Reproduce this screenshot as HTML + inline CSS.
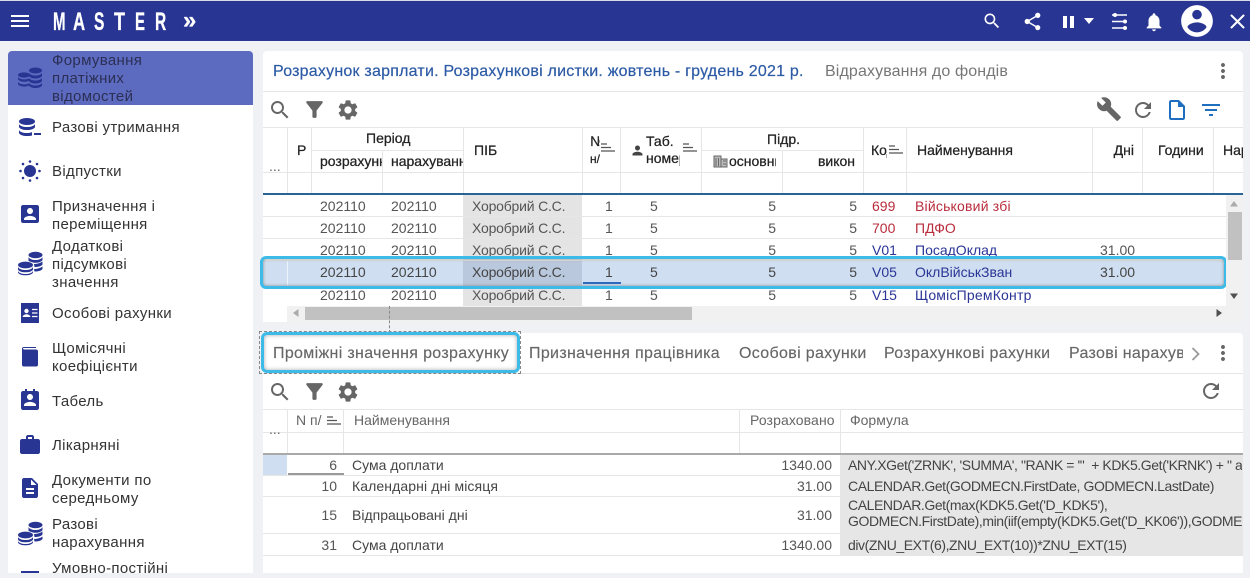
<!DOCTYPE html>
<html lang="uk"><head><meta charset="utf-8"><title>Master</title>
<style>
html,body{margin:0;padding:0;width:1250px;height:573px;overflow:hidden;background:#eff1f5;font-family:"Liberation Sans",sans-serif;font-size:14px;color:#444}
.a,.t,svg,.l{position:absolute}
.t{white-space:nowrap;line-height:18px}
.s{color:#333;font-size:15px;letter-spacing:.33px;left:52px;margin-top:1px}
.h{color:#222;-webkit-text-stroke:.25px #222;font-size:14px}
.d{color:#555}
.r{text-align:right}
.rd{color:#b92c3c}.bl{color:#2a3596}
.g{color:#666}
.hg{color:#666;font-size:14px}
.tab{color:#666;font-size:16px;letter-spacing:.33px;-webkit-text-stroke:.15px #666;margin-top:1px}
.l{background:#e6e6e6}
.c{overflow:hidden}
.f{letter-spacing:-.42px}
.p{letter-spacing:-.2px}
svg.n{fill:#283593}
svg.gy{fill:#666}
svg.w{fill:#fff}
</style></head><body>

<!-- header -->
<div class="a" style="left:0;top:1px;width:1250px;height:40px;background:#283593"></div>
<div class="a" style="left:0;top:0;width:1250px;height:1px;background:#d8dbe8"></div>
<svg class="w" style="left:8px;top:9px" width="24" height="24" viewBox="0 0 24 24"><path d="M3 18h18v-2H3v2zm0-5h18v-2H3v2zm0-7v2h18V6H3z"/></svg>
<div style="position:absolute;left:0;top:0;color:#fff;font-weight:bold;font-size:25px;line-height:26px;-webkit-text-stroke:.3px #fff">
<span class="a" style="left:53px;top:9px;transform:scaleX(.6);transform-origin:left">M</span>
<span class="a" style="left:73px;top:9px;transform:scaleX(.67);transform-origin:left">A</span>
<span class="a" style="left:94px;top:9px;transform:scaleX(.62);transform-origin:left">S</span>
<span class="a" style="left:114px;top:9px;transform:scaleX(.72);transform-origin:left">T</span>
<span class="a" style="left:135px;top:9px;transform:scaleX(.6);transform-origin:left">E</span>
<span class="a" style="left:155px;top:9px;transform:scaleX(.62);transform-origin:left">R</span>
<span class="a" style="left:183px;top:8px;font-size:24px">»</span>
</div>
<svg class="w" style="left:982px;top:11px" width="20" height="20" viewBox="0 0 24 24"><path d="M15.5 14h-.79l-.28-.27C15.41 12.59 16 11.11 16 9.5 16 5.91 13.09 3 9.5 3S3 5.91 3 9.5 5.91 16 9.5 16c1.61 0 3.09-.59 4.23-1.57l.27.28v.79l5 4.99L20.49 19l-4.99-5zm-6 0C7.01 14 5 11.99 5 9.5S7.01 5 9.5 5 14 7.01 14 9.5 11.99 14 9.5 14z"/></svg>
<svg class="w" style="left:1022px;top:11px" width="21" height="21" viewBox="0 0 24 24"><path d="M18 16.08c-.76 0-1.44.3-1.96.77L8.91 12.7c.05-.23.09-.46.09-.7s-.04-.47-.09-.7l7.05-4.11c.54.5 1.25.81 2.04.81 1.66 0 3-1.34 3-3s-1.34-3-3-3-3 1.34-3 3c0 .24.04.47.09.7L8.04 9.81C7.5 9.31 6.79 9 6 9c-1.66 0-3 1.34-3 3s1.34 3 3 3c.79 0 1.5-.31 2.04-.81l7.12 4.16c-.05.21-.08.43-.08.65 0 1.61 1.31 2.92 2.92 2.92 1.61 0 2.92-1.31 2.92-2.92s-1.31-2.92-2.92-2.92z"/></svg>
<div class="a" style="left:1063px;top:16px;width:4px;height:12px;background:#fff"></div>
<div class="a" style="left:1070px;top:16px;width:4px;height:12px;background:#fff"></div>
<svg class="w" style="left:1083px;top:18px" width="12" height="7" viewBox="0 0 12 7"><path d="M1 0h10L6 6z"/></svg>
<svg style="left:1110px;top:12px" width="20" height="20" viewBox="0 0 20 20"><g stroke="#fff" stroke-width="1.5" fill="#fff"><path d="M2 3h15M2 9.500h15M2 16h15" fill="none"/><circle cx="5" cy="3" r="2" stroke="none"/><circle cx="15" cy="9.500" r="2" stroke="none"/><circle cx="15" cy="16" r="2" stroke="none"/></g></svg>
<svg class="w" style="left:1143px;top:11px" width="22" height="22" viewBox="0 0 24 24"><path d="M12 22c1.1 0 2-.9 2-2h-4c0 1.1.89 2 2 2zm6-6v-5c0-3.07-1.64-5.64-4.5-6.32V4c0-.83-.67-1.5-1.5-1.5s-1.5.67-1.5 1.5v.68C7.63 5.36 6 7.92 6 11v5l-2 2v1h16v-1l-2-2z"/></svg>
<svg class="w" style="left:1178px;top:2px" width="38" height="38" viewBox="0 0 24 24"><path d="M12 2C6.48 2 2 6.48 2 12s4.48 10 10 10 10-4.48 10-10S17.52 2 12 2zm0 3c1.66 0 3 1.34 3 3s-1.34 3-3 3-3-1.34-3-3 1.34-3 3-3zm0 14.2c-2.5 0-4.71-1.28-6-3.22.03-1.99 4-3.08 6-3.08 1.99 0 5.97 1.09 6 3.08-1.29 1.94-3.5 3.22-6 3.22z"/></svg>
<svg class="w" style="left:1225px;top:9px" width="25" height="25" viewBox="0 0 24 24"><path d="M19 6.41L17.59 5 12 10.59 6.41 5 5 6.41 10.59 12 5 17.59 6.41 19 12 13.41 17.59 19 19 17.59 13.41 12z"/></svg>

<!-- sidebar -->
<div class="a" style="left:8px;top:51px;width:245px;height:522px;background:#fff;border-radius:4px 4px 0 0"></div>
<div class="a" style="left:8px;top:51px;width:245px;height:54px;background:#5c6bc0;border-radius:4px 4px 0 0"></div>
<div class="t s" style="top:51px;color:#2b2f55">Формування</div>
<div class="t s" style="top:69px;color:#2b2f55">платіжних</div>
<div class="t s" style="top:87px;color:#2b2f55">відомостей</div>
<div class="t s" style="top:118px">Разові утримання</div>
<div class="t s" style="top:162px">Відпустки</div>
<div class="t s" style="top:197px">Призначення і</div>
<div class="t s" style="top:215px">переміщення</div>
<div class="t s" style="top:237px">Додаткові</div>
<div class="t s" style="top:255px">підсумкові</div>
<div class="t s" style="top:273px">значення</div>
<div class="t s" style="top:304px">Особові рахунки</div>
<div class="t s" style="top:339px">Щомісячні</div>
<div class="t s" style="top:357px">коефіцієнти</div>
<div class="t s" style="top:392px">Табель</div>
<div class="t s" style="top:436px">Лікарняні</div>
<div class="t s" style="top:471px">Документи по</div>
<div class="t s" style="top:489px">середньому</div>
<div class="t s" style="top:515px">Разові</div>
<div class="t s" style="top:533px">нарахування</div>
<div class="t s" style="top:559px">Умовно-постійні</div>

<!-- sidebar icons -->
<svg class="n" style="left:18px;top:67px" width="25" height="22" viewBox="0 0 25 22"><g><ellipse cx="6" cy="8" rx="6" ry="2.6"/><path d="M0 10c1 1.6 3.5 2.4 6 2.4s4-.5 5-1.2v2.4c-1 .7-2.700 1.200-5 1.200S1 13.900 0 12.300zM0 15c1 1.600 3.500 2.400 6 2.400s4-.5 5-1.200v2c-1 .9-2.700 1.400-5 1.400S1 18.800 0 17.300z"/><ellipse cx="17.500" cy="3.500" rx="6.500" ry="3"/><path d="M11 6c1.200 1.700 3.700 2.500 6.500 2.500S22.800 7.700 24 6v3c-1 1.600-3.500 2.500-6.500 2.500S12 10.600 11 9zM11 11c1.200 1.700 3.700 2.500 6.500 2.500s5.300-.8 6.500-2.500v3c-1 1.600-3.500 2.500-6.500 2.500S12 15.600 11 14zM11 16c1.200 1.700 3.700 2.500 6.500 2.500s5.300-.8 6.500-2.500v2.500c-1 1.700-3.500 2.500-6.500 2.500S12 20.200 11 18.500z"/></g></svg>
<svg class="n" style="left:19px;top:118px" width="23" height="18" viewBox="0 0 23 18"><ellipse cx="8" cy="3.500" rx="8" ry="3.500"/><path d="M0 6c1 2 4 3 8 3s7-1 8-3v3c-1 2-4 3-8 3s-7-1-8-3zM0 12c1 2 4 3 8 3 2 0 4-.3 5-1v3.500c-1 .4-3 .5-5 .5-4 0-7-1-8-3z"/><rect x="15" y="15" width="7" height="2"/></svg>
<svg class="n" style="left:18px;top:159px" width="24" height="24" viewBox="0 0 24 24"><circle cx="12" cy="12" r="6"/><circle cx="12" cy="2.500" r="1.300"/><circle cx="12" cy="21.500" r="1.300"/><circle cx="2.500" cy="12" r="1.300"/><circle cx="21.500" cy="12" r="1.300"/><circle cx="5" cy="5" r="1.300"/><circle cx="19" cy="5" r="1.300"/><circle cx="5" cy="19" r="1.300"/><circle cx="19" cy="19" r="1.300"/></svg>
<svg class="n" style="left:18px;top:202px" width="24" height="24" viewBox="0 0 24 24"><path d="M3 5v14c0 1.100.89 2 2 2h14c1.100 0 2-.9 2-2V5c0-1.100-.9-2-2-2H5c-1.110 0-2 .9-2 2zm12 4c0 1.660-1.340 3-3 3s-3-1.340-3-3 1.340-3 3-3 3 1.340 3 3zm-9 8c0-2 4-3.100 6-3.100s6 1.100 6 3.100v1H6v-1z"/></svg>
<svg class="n" style="left:18px;top:251px" width="25" height="25" viewBox="0 0 25 25"><g><ellipse cx="17.500" cy="4" rx="7" ry="3.200"/><path d="M10.500 6c1 2 4 3 7 3s6-1 7-3v3c-1 1.800-4 2.800-7 2.800-1 0-2-.1-3-.4-1-.5-3-.8-4-1.400zM16 13c3 0 6-.8 8.500-2.500v3c-1 1.500-4 2.500-8 2.500zM16 18c3 0 6-.8 8.500-2.500v2.500c-1 1.500-4 2.500-8 2.500z"/><ellipse cx="7.500" cy="14" rx="7.500" ry="3.400"/><path d="M0 16c1 2 4 3 7.500 3s6.500-1 7.500-3v2.500c-1 2-4 2.800-7.500 2.800S1 20.500 0 18.500zM0 20c1 2 4 3 7.500 3s6.500-1 7.500-3v1.500c-1 2-4 2.800-7.500 2.800S1 23.500 0 21.500z"/></g></svg>
<svg style="left:21px;top:303px" width="18" height="20" viewBox="0 0 18 20"><path fill="#283593" d="M0 0h18v20H0z"/><circle cx="5.500" cy="8" r="2.200" fill="#fff"/><path d="M1.500 14c.5-2 2.500-2.800 4-2.800s3.500.8 4 2.800z" fill="#fff"/><path d="M11 6.500h5.500M11 10h5.500M11 13.500h5.500" stroke="#fff" stroke-width="1.200"/></svg>
<svg class="n" style="left:18px;top:344px" width="24" height="24" viewBox="0 0 24 24"><path d="M6 5.500h12c1.100 0 2 .5 2 2V21c0 1-.9 1.500-2 1.500H6c-1.100 0-2-.5-2-1.500V4.500C4 3.500 5 3 6 3h12v1H6c-.6 0-1 .2-1 .5s.4 1 1 1z"/></svg>
<svg class="n" style="left:18px;top:388px" width="24" height="24" viewBox="0 0 24 24"><path d="M5 3h2V1h2v2h6V1h2v2h2c1.100 0 2 .9 2 2v15c0 1.100-.9 2-2 2H5c-1.100 0-2-.9-2-2V5c0-1.100.9-2 2-2zm10 6c0-1.660-1.340-3-3-3S9 7.340 9 9s1.340 3 3 3 3-1.340 3-3zM6 17v1h12v-1c0-2-4-3.100-6-3.100s-6 1.100-6 3.100z"/></svg>
<svg class="n" style="left:18px;top:433px" width="24" height="24" viewBox="0 0 24 24"><path d="M20 6h-4V4c0-1.110-.89-2-2-2h-4c-1.110 0-2 .89-2 2v2H4c-1.110 0-1.990.89-1.990 2L2 19c0 1.110.89 2 2 2h16c1.110 0 2-.89 2-2V8c0-1.110-.89-2-2-2zm-6 0h-4V4h4v2z"/></svg>
<svg class="n" style="left:18px;top:476px" width="24" height="24" viewBox="0 0 24 24"><path d="M14 2H6c-1.100 0-1.990.9-1.990 2L4 20c0 1.100.89 2 1.990 2H18c1.100 0 2-.9 2-2V8l-6-6zm2 16H8v-2h8v2zm0-4H8v-2h8v2zm-3-5V3.500L18.500 9H13z"/></svg>
<svg class="n" style="left:18px;top:521px" width="25" height="25" viewBox="0 0 25 25"><g><ellipse cx="17.500" cy="4" rx="7" ry="3.200"/><path d="M10.500 6c1 2 4 3 7 3s6-1 7-3v3c-1 1.800-4 2.800-7 2.800-1 0-2-.1-3-.4-1-.5-3-.8-4-1.400zM16 13c3 0 6-.8 8.500-2.500v3c-1 1.500-4 2.500-8 2.500zM16 18c3 0 6-.8 8.500-2.500v2.500c-1 1.500-4 2.500-8 2.500z"/><ellipse cx="7.500" cy="14" rx="7.500" ry="3.400"/><path d="M0 16c1 2 4 3 7.500 3s6.500-1 7.500-3v2.500c-1 2-4 2.800-7.500 2.800S1 20.500 0 18.500zM0 20c1 2 4 3 7.500 3s6.500-1 7.500-3v1.500c-1 2-4 2.800-7.500 2.800S1 23.500 0 21.500z"/></g></svg>
<div class="a" style="left:21px;top:571px;width:18px;height:2px;background:#283593"></div>

<!-- top card -->
<div class="a" style="left:263px;top:51px;width:980px;height:271px;background:#fff;border-radius:4px 4px 0 0"></div>
<div class="t" style="left:273px;top:63px;font-size:16px;letter-spacing:.22px;color:#2c5aa5;-webkit-text-stroke:.2px #2c5aa5">Розрахунок зарплати. Розрахункові листки. жовтень - грудень 2021 р.</div>
<div class="t" style="left:825px;top:63px;font-size:16px;letter-spacing:.12px;color:#777">Відрахування до фондів</div>
<svg class="gy" style="left:1211px;top:59px" width="24" height="24" viewBox="0 0 24 24"><path d="M12 8c1.100 0 2-.9 2-2s-.9-2-2-2-2 .9-2 2 .9 2 2 2zm0 2c-1.100 0-2 .9-2 2s.9 2 2 2 2-.9 2-2-.9-2-2-2zm0 6c-1.100 0-2 .9-2 2s.9 2 2 2 2-.9 2-2-.9-2-2-2z"/></svg>
<div class="l" style="left:263px;top:91px;width:980px;height:1px"></div>

<!-- toolbar top -->
<svg class="gy" style="left:268px;top:98px" width="24" height="24" viewBox="0 0 24 24"><path d="M15.500 14h-.79l-.28-.27C15.410 12.590 16 11.110 16 9.500 16 5.910 13.090 3 9.500 3S3 5.910 3 9.500 5.910 16 9.500 16c1.610 0 3.090-.59 4.230-1.570l.27.28v.79l5 4.990L20.490 19l-4.990-5zm-6 0C7.010 14 5 11.990 5 9.500S7.010 5 9.500 5 14 7.010 14 9.500 11.990 14 9.500 14z"/></svg>
<svg class="gy" style="left:302px;top:97px" width="25" height="25" viewBox="0 0 24 24"><path d="M4.250 5.610C6.270 8.200 10 13 10 13v6c0 .55.450 1 1 1h2c.55 0 1-.45 1-1v-6s3.720-4.800 5.740-7.390c.51-.66.040-1.610-.79-1.610H5.040c-.83 0-1.300.95-.79 1.610z"/></svg>
<svg class="gy" style="left:336px;top:98px" width="24" height="24" viewBox="0 0 24 24"><path d="M19.140 12.940c.04-.3.060-.61.060-.94 0-.32-.02-.64-.07-.94l2.030-1.580c.18-.14.23-.41.120-.61l-1.920-3.320c-.12-.22-.37-.29-.59-.22l-2.390.96c-.5-.38-1.030-.7-1.620-.94l-.36-2.540c-.04-.24-.24-.41-.48-.41h-3.840c-.24 0-.43.17-.47.41l-.36 2.540c-.59.24-1.130.57-1.620.94l-2.390-.96c-.22-.08-.47 0-.59.22L2.740 8.870c-.12.21-.08.47.12.61l2.030 1.580c-.05.3-.09.63-.09.94s.02.64.07.94l-2.030 1.580c-.18.14-.23.41-.12.61l1.920 3.320c.12.22.37.29.59.22l2.390-.96c.5.38 1.030.7 1.620.94l.36 2.540c.05.24.24.41.48.41h3.840c.24 0 .44-.17.47-.41l.36-2.540c.59-.24 1.130-.56 1.620-.94l2.390.96c.22.08.47 0 .59-.22l1.920-3.320c.12-.22.070-.47-.12-.61l-2.010-1.580zM12 15.600c-1.980 0-3.600-1.620-3.600-3.600s1.620-3.600 3.600-3.600 3.600 1.620 3.600 3.600-1.620 3.600-3.600 3.600z"/></svg>
<svg class="gy" style="left:1096px;top:96px" width="26" height="26" viewBox="0 0 24 24"><path d="M22.700 19l-9.100-9.100c.9-2.300.4-5-1.500-6.900-2-2-5-2.400-7.400-1.300L9 6 6 9 1.600 4.700C.4 7.100.9 10.100 2.900 12.100c1.900 1.900 4.600 2.400 6.900 1.500l9.100 9.100c.4.400 1 .4 1.400 0l2.300-2.300c.5-.4.5-1.100.1-1.400z"/></svg>
<svg class="gy" style="left:1131px;top:98px" width="24" height="24" viewBox="0 0 24 24"><path d="M17.650 6.350C16.200 4.900 14.210 4 12 4c-4.420 0-7.990 3.580-7.990 8s3.570 8 7.990 8c3.730 0 6.840-2.550 7.730-6h-2.080c-.82 2.330-3.040 4-5.650 4-3.310 0-6-2.690-6-6s2.690-6 6-6c1.660 0 3.140.69 4.220 1.780L13 11h7V4l-2.350 2.350z"/></svg>
<svg style="left:1165px;top:98px;fill:#1e6fc0" width="24" height="24" viewBox="0 0 24 24"><path d="M14 2H6c-1.100 0-2 .9-2 2v16c0 1.100.9 2 2 2h12c1.100 0 2-.9 2-2V8l-6-6zm4 18H6V4h7v5h5v11z"/></svg>
<svg style="left:1199px;top:98px;fill:#1e6fc0" width="24" height="24" viewBox="0 0 24 24"><path d="M10 18h4v-2h-4v2zM3 6v2h18V6H3zm3 7h12v-2H6v2z"/></svg>

<!-- top table grid -->
<div class="l" style="left:263px;top:127px;width:980px;height:1px"></div>
<div class="l" style="left:312px;top:150px;width:151px;height:1px"></div>
<div class="l" style="left:702px;top:150px;width:161px;height:1px"></div>
<div class="l" style="left:263px;top:172px;width:980px;height:1px"></div>
<div class="a" style="left:263px;top:193px;width:980px;height:2px;background:#2a6496"></div>
<div class="l" style="left:287px;top:128px;width:1px;height:65px"></div>
<div class="l" style="left:311px;top:128px;width:1px;height:65px"></div>
<div class="l" style="left:382px;top:150px;width:1px;height:43px"></div>
<div class="l" style="left:463px;top:128px;width:1px;height:65px"></div>
<div class="l" style="left:582px;top:128px;width:1px;height:65px"></div>
<div class="l" style="left:620px;top:128px;width:1px;height:65px"></div>
<div class="l" style="left:701px;top:128px;width:1px;height:65px"></div>
<div class="l" style="left:782px;top:150px;width:1px;height:43px"></div>
<div class="l" style="left:863px;top:128px;width:1px;height:65px"></div>
<div class="l" style="left:906px;top:128px;width:1px;height:65px"></div>
<div class="l" style="left:1092px;top:128px;width:1px;height:65px"></div>
<div class="l" style="left:1142px;top:128px;width:1px;height:65px"></div>
<div class="l" style="left:1213px;top:128px;width:1px;height:65px"></div>

<!-- header text -->
<div class="t g" style="left:269px;top:157px">...</div>
<div class="t h" style="left:297px;top:141px">Р</div>
<div class="t h" style="left:366px;top:129px">Період</div>
<div class="t h c" style="left:320px;top:152px;width:62px">розрахунки</div>
<div class="t h c" style="left:391px;top:152px;width:72px">нарахування</div>
<div class="t h" style="left:474px;top:141px">ПІБ</div>
<div class="t h c" style="left:590px;top:132px;width:10px">№</div>
<div class="t h c" style="left:590px;top:150px;width:10px;font-size:12px">н/п</div>
<svg style="left:601px;top:143px" width="14" height="10" viewBox="0 0 14 10"><path d="M0 1h6M0 4.500h10M0 8h14" stroke="#555" stroke-width="1.200"/></svg>
<svg class="gy" style="left:630px;top:143px;fill:#444" width="15" height="15" viewBox="0 0 24 24"><path d="M12 12c2.210 0 4-1.790 4-4s-1.790-4-4-4-4 1.790-4 4 1.790 4 4 4zm0 2c-2.670 0-8 1.340-8 4v2h16v-2c0-2.660-5.330-4-8-4z"/></svg>
<div class="t h" style="left:646px;top:132px">Таб.</div>
<div class="t h c" style="left:646px;top:149px;width:34px">номер</div>
<svg style="left:683px;top:143px" width="14" height="10" viewBox="0 0 14 10"><path d="M0 1h6M0 4.500h10M0 8h14" stroke="#555" stroke-width="1.200"/></svg>
<div class="t h" style="left:767px;top:130px">Підр.</div>
<svg style="left:713px;top:155px" width="15" height="13" viewBox="0 0 15 13"><path d="M1 1h7v11H1zM8 4h6v8H8z" fill="#bbb" stroke="#666" stroke-width="1"/><path d="M3 3v8M5.500 3v8M10 6h3M10 9h3" stroke="#666"/></svg>
<div class="t h c" style="left:729px;top:152px;width:47px">основний</div>
<div class="t h r" style="left:800px;top:152px;width:55px">викон</div>
<div class="t h c" style="left:871px;top:141px;width:16px">Код</div>
<svg style="left:889px;top:145px" width="14" height="10" viewBox="0 0 14 10"><path d="M0 1h6M0 4.500h10M0 8h14" stroke="#555" stroke-width="1.200"/></svg>
<div class="t h" style="left:917px;top:141px">Найменування</div>
<div class="t h r" style="left:1092px;top:141px;width:42px">Дні</div>
<div class="t h" style="left:1158px;top:141px">Години</div>
<div class="t h c" style="left:1223px;top:141px;width:20px">Нар</div>

<!-- rows area -->
<div class="a" style="left:463px;top:195px;width:119px;height:111px;background:#e4e4e4"></div>
<div class="l" style="left:263px;top:216px;width:963px;height:1px"></div>
<div class="l" style="left:263px;top:238px;width:963px;height:1px"></div>
<div class="l" style="left:263px;top:260px;width:963px;height:1px"></div>

<div class="c a" style="left:263px;top:195px;width:963px;height:111px" id="x">
<div class="t d" style="left:57px;top:2px">202110</div><div class="t d" style="left:128px;top:2px">202110</div><div class="t d p" style="left:209px;top:2px">Хоробрий С.С.</div><div class="t d" style="left:342px;top:2px">1</div><div class="t d" style="left:387px;top:2px">5</div><div class="t d r" style="left:480px;top:2px;width:33px">5</div><div class="t d r" style="left:561px;top:2px;width:33px">5</div><div class="t rd" style="left:609px;top:2px">699</div><div class="t rd" style="left:652px;top:2px;letter-spacing:.2px">Військовий збі</div>
<div class="t d" style="left:57px;top:24px">202110</div><div class="t d" style="left:128px;top:24px">202110</div><div class="t d p" style="left:209px;top:24px">Хоробрий С.С.</div><div class="t d" style="left:342px;top:24px">1</div><div class="t d" style="left:387px;top:24px">5</div><div class="t d r" style="left:480px;top:24px;width:33px">5</div><div class="t d r" style="left:561px;top:24px;width:33px">5</div><div class="t rd" style="left:609px;top:24px">700</div><div class="t rd" style="left:652px;top:24px">ПДФО</div>
<div class="t d" style="left:57px;top:46px">202110</div><div class="t d" style="left:128px;top:46px">202110</div><div class="t d p" style="left:209px;top:46px">Хоробрий С.С.</div><div class="t d" style="left:342px;top:46px">1</div><div class="t d" style="left:387px;top:46px">5</div><div class="t d r" style="left:480px;top:46px;width:33px">5</div><div class="t d r" style="left:561px;top:46px;width:33px">5</div><div class="t bl" style="left:609px;top:46px">V01</div><div class="t bl" style="left:652px;top:46px">ПосадОклад</div><div class="t d" style="left:837px;top:46px">31.00</div>
<div class="t d" style="left:57px;top:91px">202110</div><div class="t d" style="left:128px;top:91px">202110</div><div class="t d p" style="left:209px;top:91px">Хоробрий С.С.</div><div class="t d" style="left:342px;top:91px">1</div><div class="t d" style="left:387px;top:91px">5</div><div class="t d r" style="left:480px;top:91px;width:33px">5</div><div class="t d r" style="left:561px;top:91px;width:33px">5</div><div class="t bl" style="left:609px;top:91px">V15</div><div class="t bl" style="left:652px;top:91px;letter-spacing:.2px">ЩомісПремКонтр</div>
</div>

<!-- selected row -->
<div class="a" style="left:263px;top:261px;width:961px;height:26px;background:#cfdff1"></div>
<div class="a" style="left:463px;top:261px;width:119px;height:26px;background:#b9c8dc"></div>
<div class="a" style="left:287px;top:261px;width:1px;height:26px;background:#eef4fb"></div>
<div class="a" style="left:583px;top:282px;width:38px;height:2px;background:#2a6abf"></div>
<div class="t" style="left:320px;top:263px;color:#444">202110</div>
<div class="t" style="left:391px;top:263px;color:#444">202110</div>
<div class="t p" style="left:472px;top:263px;color:#444">Хоробрий С.С.</div>
<div class="t" style="left:605px;top:263px;color:#444">1</div>
<div class="t" style="left:650px;top:263px;color:#444">5</div>
<div class="t r" style="left:743px;top:263px;width:33px;color:#444">5</div>
<div class="t r" style="left:824px;top:263px;width:33px;color:#444">5</div>
<div class="t bl" style="left:872px;top:263px">V05</div>
<div class="t bl" style="left:915px;top:263px">ОклВійськЗван</div>
<div class="t" style="left:1100px;top:263px;color:#444">31.00</div>
<div class="a" style="left:260px;top:256px;width:961px;height:27px;border:3px solid #3cbbe9;border-radius:6px;box-shadow:inset 0 0 3px #888"></div>

<!-- scrollbars -->
<div class="a" style="left:263px;top:306px;width:980px;height:16px;background:#f1f1f1"></div>
<div class="a" style="left:263px;top:306px;width:24px;height:16px;background:#fff"></div>
<div class="a" style="left:1226px;top:195px;width:17px;height:127px;background:#f1f1f1"></div>
<div class="a" style="left:1228px;top:212px;width:14px;height:48px;background:#c1c1c1"></div>
<div class="a" style="left:305px;top:307px;width:387px;height:13px;background:#c1c1c1"></div>
<svg style="left:1230px;top:201px" width="9" height="6"><path d="M0 5.500h8L4 0z" fill="#aaa"/></svg>
<svg style="left:1230px;top:293px" width="9" height="6"><path d="M0 .5h8L4 6z" fill="#505050"/></svg>
<svg style="left:293px;top:309px" width="6" height="9"><path d="M5.500 0v8L0 4z" fill="#aaa"/></svg>
<svg style="left:1216px;top:309px" width="6" height="9"><path d="M.5 0v8L6 4z" fill="#505050"/></svg>
<div class="a" style="left:389px;top:306px;width:0;height:27px;border-left:1px dashed #888"></div>

<!-- bottom card -->
<div class="a" style="left:263px;top:333px;width:980px;height:240px;background:#fff;border-radius:4px 4px 0 0"></div>
<div class="l" style="left:263px;top:373px;width:980px;height:1px"></div>
<div class="a" style="left:259px;top:331px;width:262px;height:43px;border:1px dashed #888;box-sizing:border-box"></div>
<div class="a" style="left:261px;top:332px;width:259px;height:41px;box-sizing:border-box;border:3px solid #3cbbe9;border-radius:6px;background:#fff;box-shadow:inset 0 0 4px #aaa"></div>
<div class="t tab" style="left:273px;top:344px">Проміжні значення розрахунку</div>
<div class="t tab" style="left:529px;top:344px">Призначення працівника</div>
<div class="t tab" style="left:739px;top:344px">Особові рахунки</div>
<div class="t tab" style="left:884px;top:344px">Розрахункові рахунки</div>
<div class="t tab c" style="left:1069px;top:344px;width:114px">Разові нарахув</div>
<svg style="left:1190px;top:346px" width="12" height="16"><path d="M2.500 2l6 6-6 6" fill="none" stroke="#999" stroke-width="1.800"/></svg>
<svg class="gy" style="left:1211px;top:341px" width="24" height="24" viewBox="0 0 24 24"><path d="M12 8c1.100 0 2-.9 2-2s-.9-2-2-2-2 .9-2 2 .9 2 2 2zm0 2c-1.100 0-2 .9-2 2s.9 2 2 2 2-.9 2-2-.9-2-2-2zm0 6c-1.100 0-2 .9-2 2s.9 2 2 2 2-.9 2-2-.9-2-2-2z"/></svg>

<!-- bottom toolbar -->
<svg class="gy" style="left:268px;top:380px" width="24" height="24" viewBox="0 0 24 24"><path d="M15.500 14h-.79l-.28-.27C15.410 12.590 16 11.110 16 9.500 16 5.910 13.090 3 9.500 3S3 5.910 3 9.500 5.910 16 9.500 16c1.610 0 3.090-.59 4.230-1.570l.27.28v.79l5 4.990L20.490 19l-4.990-5zm-6 0C7.010 14 5 11.990 5 9.500S7.010 5 9.500 5 14 7.010 14 9.500 11.990 14 9.500 14z"/></svg>
<svg class="gy" style="left:302px;top:379px" width="25" height="25" viewBox="0 0 24 24"><path d="M4.250 5.610C6.270 8.200 10 13 10 13v6c0 .55.450 1 1 1h2c.55 0 1-.45 1-1v-6s3.720-4.800 5.740-7.390c.51-.66.040-1.610-.79-1.610H5.040c-.83 0-1.300.95-.79 1.610z"/></svg>
<svg class="gy" style="left:336px;top:380px" width="24" height="24" viewBox="0 0 24 24"><path d="M19.140 12.940c.04-.3.060-.61.060-.94 0-.32-.02-.64-.07-.94l2.030-1.580c.18-.14.23-.41.120-.61l-1.920-3.320c-.12-.22-.37-.29-.59-.22l-2.390.96c-.5-.38-1.030-.7-1.620-.94l-.36-2.540c-.04-.24-.24-.41-.48-.41h-3.840c-.24 0-.43.17-.47.41l-.36 2.540c-.59.24-1.130.57-1.620.94l-2.390-.96c-.22-.08-.47 0-.59.22L2.740 8.870c-.12.21-.08.47.12.61l2.030 1.580c-.05.3-.09.63-.09.94s.02.64.07.94l-2.030 1.580c-.18.14-.23.41-.12.61l1.920 3.320c.12.22.37.29.59.22l2.390-.96c.5.38 1.030.7 1.620.94l.36 2.540c.05.24.24.41.48.41h3.840c.24 0 .44-.17.47-.41l.36-2.540c.59-.24 1.130-.56 1.620-.94l2.390.96c.22.08.47 0 .59-.22l1.920-3.320c.12-.22.070-.47-.12-.61l-2.010-1.580zM12 15.600c-1.980 0-3.600-1.620-3.600-3.600s1.620-3.600 3.600-3.600 3.600 1.620 3.600 3.600-1.620 3.600-3.600 3.600z"/></svg>
<svg class="gy" style="left:1199px;top:379px" width="24" height="24" viewBox="0 0 24 24"><path d="M17.650 6.350C16.200 4.900 14.210 4 12 4c-4.420 0-7.990 3.580-7.990 8s3.570 8 7.990 8c3.730 0 6.840-2.550 7.730-6h-2.080c-.82 2.330-3.040 4-5.650 4-3.310 0-6-2.690-6-6s2.690-6 6-6c1.660 0 3.140.69 4.220 1.780L13 11h7V4l-2.350 2.350z"/></svg>

<!-- bottom table -->
<div class="l" style="left:263px;top:409px;width:980px;height:1px"></div>
<div class="l" style="left:263px;top:432px;width:980px;height:1px"></div>
<div class="a" style="left:263px;top:453px;width:980px;height:2px;background:#a9a9a9"></div>
<div class="l" style="left:287px;top:410px;width:1px;height:43px"></div>
<div class="l" style="left:343px;top:410px;width:1px;height:43px"></div>
<div class="l" style="left:739px;top:410px;width:1px;height:43px"></div>
<div class="l" style="left:840px;top:410px;width:1px;height:43px"></div>
<div class="a" style="left:840px;top:455px;width:403px;height:100px;background:#e6e6e6"></div>
<div class="a" style="left:263px;top:455px;width:24px;height:20px;background:#cfdff1"></div>
<div class="a" style="left:288px;top:473px;width:56px;height:2px;background:#9a9a9a"></div>
<div class="l" style="left:263px;top:475px;width:980px;height:1px"></div>
<div class="l" style="left:263px;top:496px;width:980px;height:1px"></div>
<div class="l" style="left:263px;top:533px;width:980px;height:1px"></div>
<div class="l" style="left:263px;top:555px;width:980px;height:1px"></div>

<div class="t g" style="left:269px;top:420px">...</div>
<div class="t hg" style="left:296px;top:411px">N п/</div>
<svg style="left:327px;top:416px" width="14" height="10" viewBox="0 0 14 10"><path d="M0 1h6M0 4.500h10M0 8h14" stroke="#555" stroke-width="1.200"/></svg>
<div class="t hg" style="left:354px;top:411px">Найменування</div>
<div class="t hg" style="left:750px;top:411px;letter-spacing:.1px">Розраховано</div>
<div class="t hg" style="left:850px;top:411px">Формула</div>

<div class="t d r" style="left:290px;top:456px;width:47px">6</div>
<div class="t d r" style="left:290px;top:477px;width:47px">10</div>
<div class="t d r" style="left:290px;top:506px;width:47px">15</div>
<div class="t d r" style="left:290px;top:536px;width:47px">31</div>
<div class="t" style="left:352px;top:456px;color:#444">Сума доплати</div>
<div class="t" style="left:352px;top:477px;color:#444;letter-spacing:.1px">Календарні дні місяця</div>
<div class="t" style="left:352px;top:506px;color:#444">Відпрацьовані дні</div>
<div class="t" style="left:352px;top:536px;color:#444">Сума доплати</div>
<div class="t d r" style="left:750px;top:456px;width:82px">1340.00</div>
<div class="t d r" style="left:750px;top:477px;width:82px">31.00</div>
<div class="t d r" style="left:750px;top:506px;width:82px">31.00</div>
<div class="t d r" style="left:750px;top:536px;width:82px">1340.00</div>
<div class="t c f" style="left:848px;top:456px;width:394px;color:#444">ANY.XGet('ZRNK', 'SUMMA', "RANK = '"&nbsp; + KDK5.Get('KRNK') + " and</div>
<div class="t c f" style="left:848px;top:477px;width:394px;color:#444">CALENDAR.Get(GODMECN.FirstDate, GODMECN.LastDate)</div>
<div class="t c f" style="left:848px;top:497px;width:394px;color:#444;line-height:16px">CALENDAR.Get(max(KDK5.Get('D_KDK5'),</div>
<div class="t c f" style="left:848px;top:513px;width:394px;color:#444;line-height:16px">GODMECN.FirstDate),min(iif(empty(KDK5.Get('D_KK06')),GODMECN.LastDate</div>
<div class="t c f" style="left:848px;top:536px;width:394px;color:#444">div(ZNU_EXT(6),ZNU_EXT(10))*ZNU_EXT(15)</div>

</body></html>
